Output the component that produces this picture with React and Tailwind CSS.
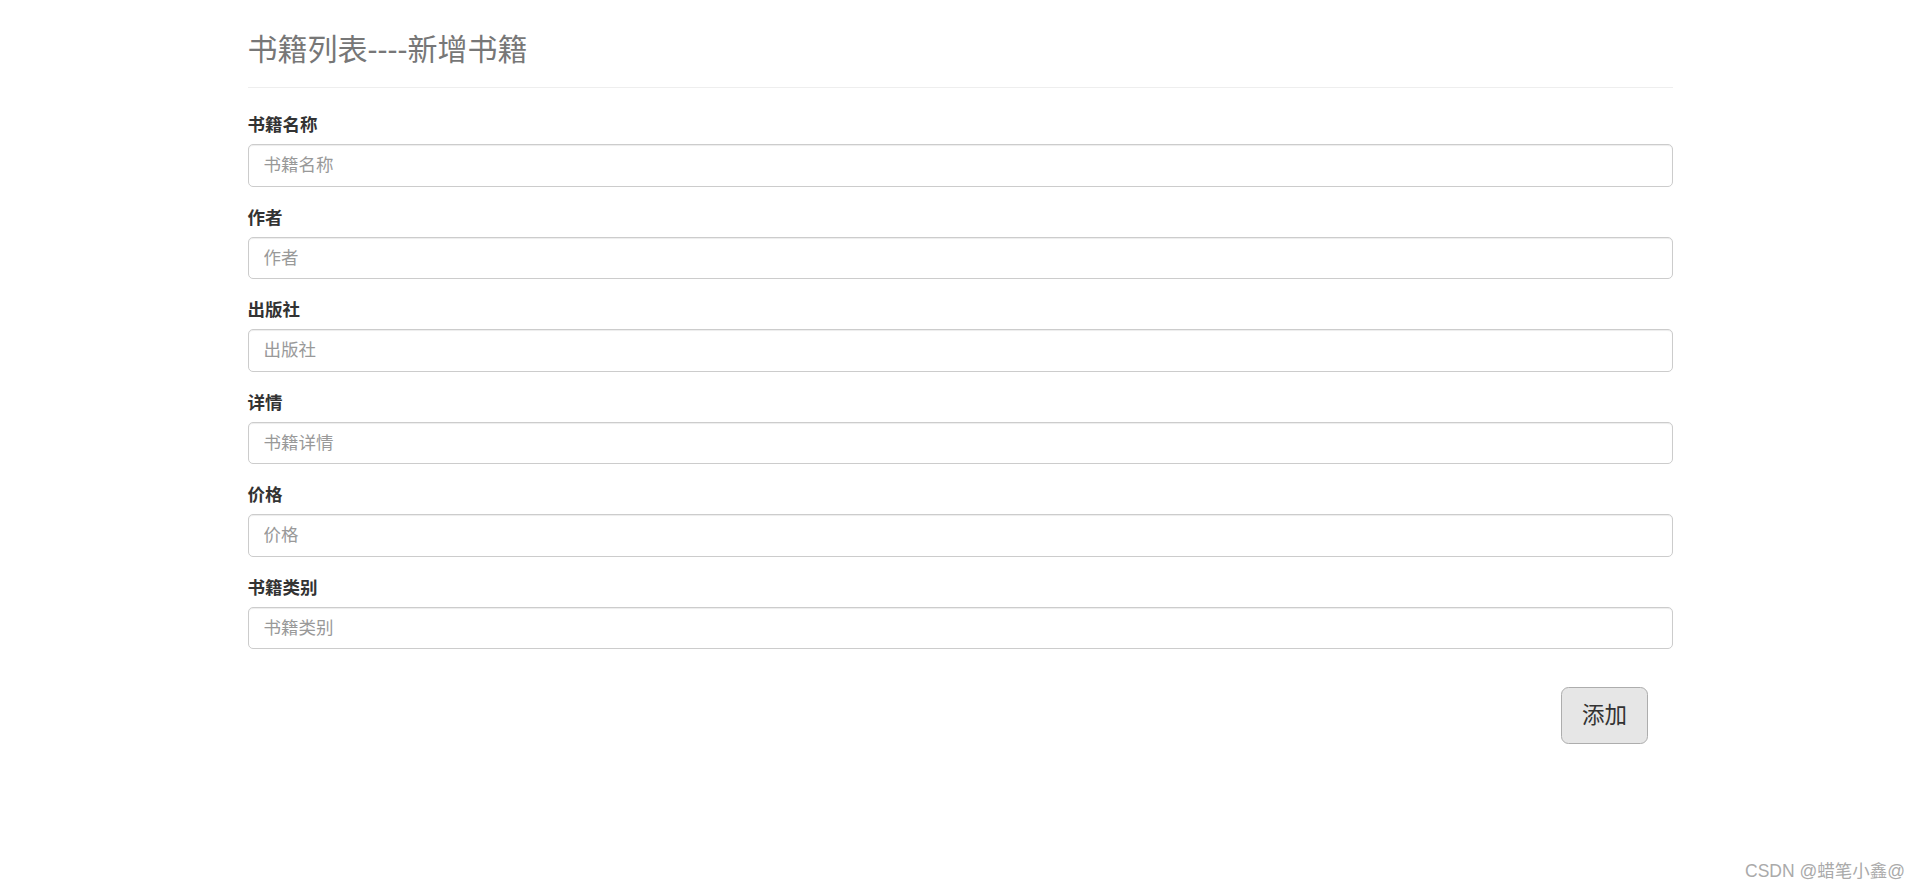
// App.jsx - 新增书籍表单
const FIELDS = [
  { label: "书籍名称", placeholder: "书籍名称" },
  { label: "作者", placeholder: "作者" },
  { label: "出版社", placeholder: "出版社" },
  { label: "详情", placeholder: "书籍详情" },
  { label: "价格", placeholder: "价格" },
  { label: "书籍类别", placeholder: "书籍类别" },
];

export default function App() {
  return (
    <div className="relative min-h-screen w-full bg-white font-['Liberation_Sans','Noto_Sans_CJK_SC',sans-serif]">
      <div className="w-[1425px] mx-auto">
        {/* Page header */}
        <div className="pt-[33px] pb-[21px] border-b border-[#eee]">
          <h3 className="text-[30px] leading-[33px] font-normal text-[#777]">书籍列表----新增书籍</h3>
        </div>

        <form className="mt-[25px]" onSubmit={(e) => e.preventDefault()}>
          {FIELDS.map((f) => (
            <div key={f.label} className="mb-[18.75px]">
              <label className="block text-[17.5px] leading-[25px] font-bold text-[#333] mb-[6.25px]">
                {f.label}
              </label>
              <input
                type="text"
                placeholder={f.placeholder}
                className="block w-full h-[42.5px] px-[15px] border border-[#ccc] rounded-[5px] bg-white text-[17.5px] text-[#555] placeholder:text-[#999] shadow-[inset_0_1px_1px_rgba(0,0,0,0.075)] outline-none"
              />
            </div>
          ))}

          <div className="flex justify-end pr-[24.5px] pt-[19px]">
            <button
              type="submit"
              className="px-[20px] py-[12.5px] text-[22.5px] leading-[30px] text-[#333] bg-[#e6e6e6] border border-[#adadad] rounded-[7.5px]"
            >
              添加
            </button>
          </div>
        </form>
      </div>

      {/* watermark */}
      <div className="absolute right-[15px] bottom-[10px] text-[17.5px] leading-[20px] text-[#aaa]">
        CSDN @蜡笔小鑫@
      </div>
    </div>
  );
}
